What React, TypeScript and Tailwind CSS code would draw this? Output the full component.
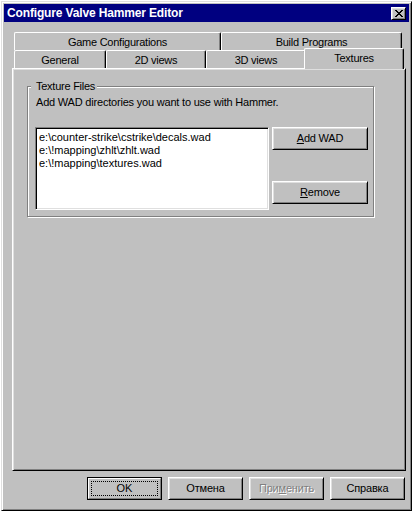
const raised =
  'border border-t-white border-l-white border-r-black border-b-black shadow-[inset_1px_1px_0_#dfdfdf,inset_-1px_-1px_0_#808080]';
const sunken =
  'border border-t-[#808080] border-l-[#808080] border-r-white border-b-white shadow-[inset_1px_1px_0_#000,inset_-1px_-1px_0_#dfdfdf]';

function Tab({ label, width, selected }: { label: string; width: number; selected?: boolean }) {
  if (selected) {
    return (
      <div
        style={{ width: width + 4 }}
        className="relative z-10 -mx-[2px] -mt-[2px] -mb-[1px] h-[21px] bg-[#c0c0c0] rounded-t-[2px] border-t border-l border-r border-t-white border-l-white border-r-black shadow-[inset_-1px_0_0_#808080] flex justify-center pt-[3px] tracking-[-0.25px]"
      >
        {label}
      </div>
    );
  }
  return (
    <div
      style={{ width }}
      className="h-[18px] bg-[#c0c0c0] rounded-t-[2px] border-t border-l border-r border-t-white border-l-white border-r-black shadow-[inset_-1px_0_0_#808080] flex items-center justify-center pt-[1px] tracking-[-0.25px]"
    >
      {label}
    </div>
  );
}

function Button({ children, className = '' }: { children: React.ReactNode; className?: string }) {
  return (
    <div className={`${raised} h-[23px] flex items-center justify-center tracking-[-0.2px] ${className}`}>
      {children}
    </div>
  );
}

export default function App() {
  const wads = [
    'e:\\counter-strike\\cstrike\\decals.wad',
    'e:\\!mapping\\zhlt\\zhlt.wad',
    'e:\\!mapping\\textures.wad',
  ];

  return (
    <div className="w-[414px] h-[513px] bg-white pt-[1px] pl-[1px] font-['Liberation_Sans',Arial,sans-serif] text-[11px] leading-[13px] text-black">
      <div className="w-[411px] h-[510px] bg-[#c0c0c0] border border-t-[#dfdfdf] border-l-[#dfdfdf] border-r-black border-b-black shadow-[inset_1px_1px_0_#fff,inset_-1px_-1px_0_#808080] p-[2px] flex flex-col">
        {/* Title bar */}
        <div className="h-[18px] bg-[#000080] flex items-center pl-[3px] pr-[3px]">
          <span className="flex-1 text-white font-bold text-[12px] tracking-[-0.15px]">
            Configure Valve Hammer Editor
          </span>
          <div className={`${raised} w-[15px] h-[13px] bg-[#c0c0c0] flex items-center justify-center shrink-0`}>
            <svg width="8" height="7" viewBox="0 0 8 7" shapeRendering="crispEdges" className="block shrink-0">
              <path
                d="M0 0h2v1H0zM6 0h2v1H6zM1 1h2v1H1zM5 1h2v1H5zM2 2h4v1H2zM3 3h2v1H3zM2 4h4v1H2zM1 5h2v1H1zM5 5h2v1H5zM0 6h2v1H0zM6 6h2v1H6z"
                fill="#000"
              />
            </svg>
          </div>
        </div>

        {/* Tab control */}
        <div className="mt-[10px] ml-[8px] w-[394px] flex flex-col">
          <div className="flex pl-[2px]">
            <Tab label="Game Configurations" width={207} />
            <Tab label="Build Programs" width={181} />
          </div>
          <div className="flex pl-[2px] h-[18px]">
            <Tab label="General" width={92} />
            <Tab label="2D views" width={100} />
            <Tab label="3D views" width={100} />
            <Tab label="Textures" width={96} selected />
          </div>
          <div className="h-[403px] border border-t-white border-l-white border-r-black border-b-black shadow-[inset_1px_1px_0_#dfdfdf,inset_-1px_-1px_0_#808080] pt-[11px] pl-[14px]">
            <fieldset className="w-[347px] h-[137px] border border-[#808080] shadow-[1px_1px_0_#fff,inset_1px_1px_0_#fff] px-[3px]">
              <legend className="pl-[5px] pr-[2px] bg-[#c0c0c0] tracking-[-0.25px]">Texture Files</legend>
              <div className="ml-[5px] mt-[3px] tracking-[-0.2px]">
                Add WAD directories you want to use with Hammer.
              </div>
              <div className="flex ml-[4px] mt-[18px] gap-[3px]">
                <div className={`${sunken} w-[234px] h-[83px] bg-white pt-[3px] pl-[3px]`}>
                  {wads.map((w) => (
                    <div key={w}>{w}</div>
                  ))}
                </div>
                <div className="flex flex-col justify-between w-[96px] h-[77px]">
                  <Button>
                    <span>
                      <span className="underline">A</span>dd WAD
                    </span>
                  </Button>
                  <Button>
                    <span>
                      <span className="underline">R</span>emove
                    </span>
                  </Button>
                </div>
              </div>
            </fieldset>
          </div>
        </div>

        {/* Dialog buttons */}
        <div className="mt-[6px] flex justify-end gap-[6px] pr-[4px]">
          <div className="w-[75px] h-[23px] border border-black">
            <div className="w-full h-full border border-t-white border-l-white border-r-[#808080] border-b-[#808080] p-[2px] flex">
              <div className="flex-1 border border-dotted border-black flex items-center justify-center">OK</div>
            </div>
          </div>
          <Button className="w-[75px]">Отмена</Button>
          <Button className="w-[75px] text-[#808080] [text-shadow:1px_1px_0_#fff]">
            <span>
              При<span className="underline">м</span>енить
            </span>
          </Button>
          <Button className="w-[75px]">Справка</Button>
        </div>
      </div>
    </div>
  );
}
